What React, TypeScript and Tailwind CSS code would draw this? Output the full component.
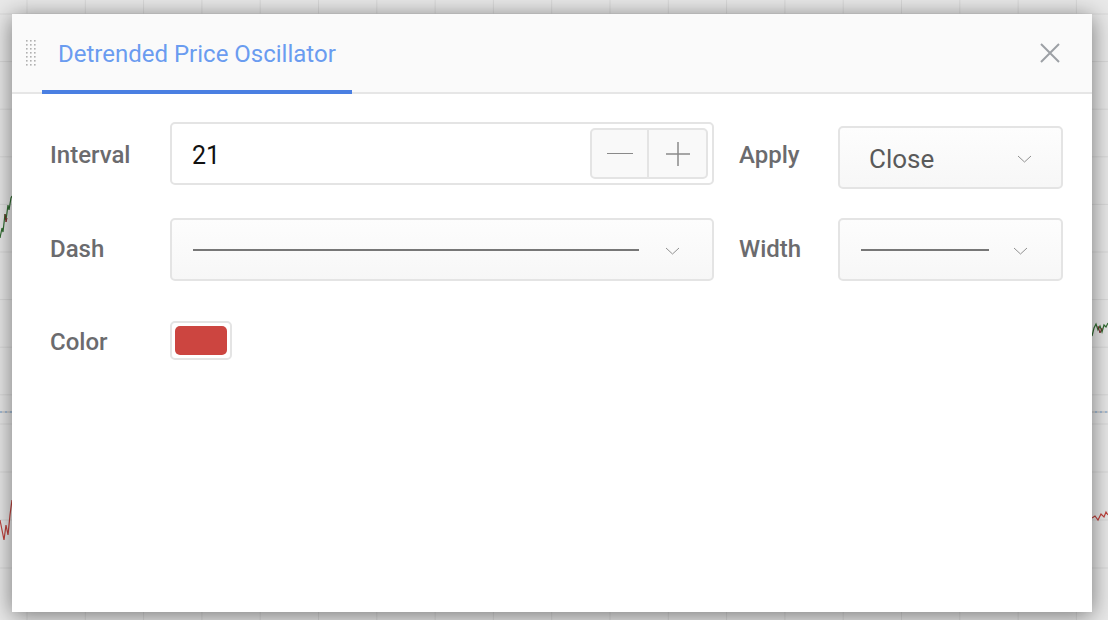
import React from 'react';

const font = { fontFamily: 'Roboto, "Noto Sans", "Liberation Sans", sans-serif' };

function ChartBackdrop() {
  const vLines = Array.from({ length: 20 }, (_, i) => 27 + i * 58.3);
  const hTop = Array.from({ length: 9 }, (_, i) => 14 + i * 47.6);
  const hBottom = [424, 472, 520, 568];
  return (
    <svg className="absolute inset-0" width="1108" height="620" viewBox="0 0 1108 620">
      <rect width="1108" height="620" fill="#e9e9e9" />
      {vLines.map((x) => (
        <line key={x} x1={x} y1="0" x2={x} y2="620" stroke="#d9d9d9" strokeWidth="1" />
      ))}
      {[...hTop, ...hBottom].map((y) => (
        <line key={y} x1="0" y1={y} x2="1108" y2={y} stroke="#d9d9d9" strokeWidth="1" />
      ))}
      <line x1="0" y1="412" x2="1108" y2="412" stroke="#b8b8b8" strokeWidth="1" />
      <path d="M0 412 h1108" stroke="#7aa7d6" strokeWidth="1" strokeDasharray="2 3" />
      {/* price candles */}
      <path d="M0 238 L2 228 L3 232 L5 214 L6 220 L8 205 L9 210 L11 198 L12 196" stroke="#2f6b2f" strokeWidth="1.2" fill="none" />
      <path d="M5 214 L6 222 L7 218" stroke="#7a2a2a" strokeWidth="1" fill="none" />
      <path d="M1092 336 L1094 328 L1096 324 L1098 330 L1100 326 L1102 332 L1104 325 L1106 327 L1108 323" stroke="#2f6b2f" strokeWidth="1.2" fill="none" />
      <path d="M1098 326 L1100 333 L1102 328" stroke="#7a2a2a" strokeWidth="1" fill="none" />
      {/* oscillator */}
      <path d="M0 520 L2 530 L4 540 L6 525 L8 535 L10 515 L12 500" stroke="#c0413c" strokeWidth="1.2" fill="none" />
      <path d="M1092 518 L1095 516 L1098 520 L1101 514 L1104 517 L1106 512 L1108 515" stroke="#c0413c" strokeWidth="1.2" fill="none" />
    </svg>
  );
}

function Chevron() {
  return (
    <svg width="15" height="8" viewBox="0 0 15 8" className="shrink-0">
      <path d="M1 1 L7.5 7 L14 1" fill="none" stroke="#909090" strokeWidth="1" />
    </svg>
  );
}

function DragHandle() {
  const dots = [];
  for (let r = 0; r < 7; r++) {
    for (let c = 0; c < 3; c++) {
      dots.push(<rect key={`${r}-${c}`} x={c * 4} y={r * 4} width="1.6" height="1.6" fill="#b0b0b0" />);
    }
  }
  return (
    <svg width="11" height="27" viewBox="0 0 11 27">
      {dots}
    </svg>
  );
}

function Label({ children, className = '' }: { children: React.ReactNode; className?: string }) {
  return (
    <div className={`flex h-[63px] items-center text-[24px] font-medium text-[#6b6b6e] ${className}`}>{children}</div>
  );
}

function LineSelect({ lineWidth, className = '' }: { lineWidth?: number; className?: string }) {
  return (
    <div
      className={`flex h-[63px] items-center rounded-[5px] border-2 border-[#e4e4e4] bg-gradient-to-b from-[#fdfdfd] to-[#f7f7f7] pl-[21px] pr-[32px] ${className}`}
    >
      <div className={lineWidth ? 'h-[2px] w-[128px] bg-[#777]' : 'h-[2px] flex-1 bg-[#777]'} />
      <div className={lineWidth ? 'ml-[24px] pt-[3px]' : 'ml-[26px] pt-[3px]'}>
        <Chevron />
      </div>
    </div>
  );
}

export default function App() {
  return (
    <div className="relative h-[620px] w-[1108px] overflow-hidden" style={font}>
      <ChartBackdrop />
      <div className="relative pl-[12px] pt-[14px]">
        <div className="flex h-[598px] w-[1080px] flex-col bg-white shadow-[0_3px_22px_rgba(0,0,0,0.5)]">
          {/* Header */}
          <div className="flex h-[80px] shrink-0 items-stretch border-b-2 border-[#e6e6e6] bg-[#fafafa]">
            <div className="flex items-center pl-[14px]">
              <DragHandle />
            </div>
            <div className="-mb-[2px] ml-[5px] flex w-[310px] items-center border-b-[4px] border-[#4a7fe2] pl-[16px] pt-[3px] text-[24px] text-[#6a9cf0]">
              Detrended Price Oscillator
            </div>
            <div className="flex-1" />
            <button className="mr-[32px] flex items-center">
              <svg width="20" height="20" viewBox="0 0 20 20">
                <path d="M1 1 L19 19 M19 1 L1 19" stroke="#9ca0a5" strokeWidth="2" />
              </svg>
            </button>
          </div>

          {/* Body */}
          <div className="flex flex-col pl-[38px] pt-[28px]">
            <div className="flex h-[67px] items-start">
              <Label className="w-[120px] pt-[3px]">Interval</Label>
              <div className="flex h-[63px] w-[544px] items-center rounded-[5px] border-2 border-[#e4e4e4] bg-white pl-[20px] pr-[4px]">
                <span className="flex-1 pt-[4px] text-[25px] text-[#111]">21</span>
                <div className="flex h-[51px] overflow-hidden rounded-[5px] border-2 border-[#e4e4e4] bg-[#f9f9f9]">
                  <div className="flex w-[57px] items-center justify-center border-r-2 border-[#e4e4e4]">
                    <div className="h-[1.5px] w-[26px] bg-[#8a8a8a]" />
                  </div>
                  <div className="flex w-[57px] items-center justify-center">
                    <svg width="24" height="24" viewBox="0 0 24 24">
                      <path d="M0 12 H24 M12 0 V24" stroke="#8a8a8a" strokeWidth="1.5" />
                    </svg>
                  </div>
                </div>
              </div>
              <Label className="ml-[25px] w-[99px] pt-[3px]">Apply</Label>
              <div className="mt-[4px] flex h-[63px] w-[225px] items-center rounded-[5px] border-2 border-[#e4e4e4] bg-gradient-to-b from-[#fdfdfd] to-[#f7f7f7] pl-[29px] pr-[29px]">
                <span className="flex-1 pt-[4px] text-[26px] text-[#5a5a5a]">Close</span>
                <div className="pt-[2px]">
                  <Chevron />
                </div>
              </div>
            </div>

            <div className="mt-[29px] flex items-center">
              <Label className="w-[120px] pb-[2px]">Dash</Label>
              <LineSelect className="w-[544px]" />
              <Label className="ml-[25px] w-[99px] pb-[2px]">Width</Label>
              <LineSelect className="w-[225px]" lineWidth={128} />
            </div>

            <div className="mt-[39px] flex items-center">
              <div className="flex w-[120px] items-center pt-[4px] text-[24px] font-medium text-[#6b6b6e]">Color</div>
              <div className="flex h-[39px] w-[62px] items-center justify-center rounded-[5px] border-2 border-[#e4e4e4] bg-white">
                <div className="h-[29px] w-[52px] rounded-[5px] bg-[#cc4540]" />
              </div>
            </div>
          </div>
        </div>
      </div>
    </div>
  );
}
